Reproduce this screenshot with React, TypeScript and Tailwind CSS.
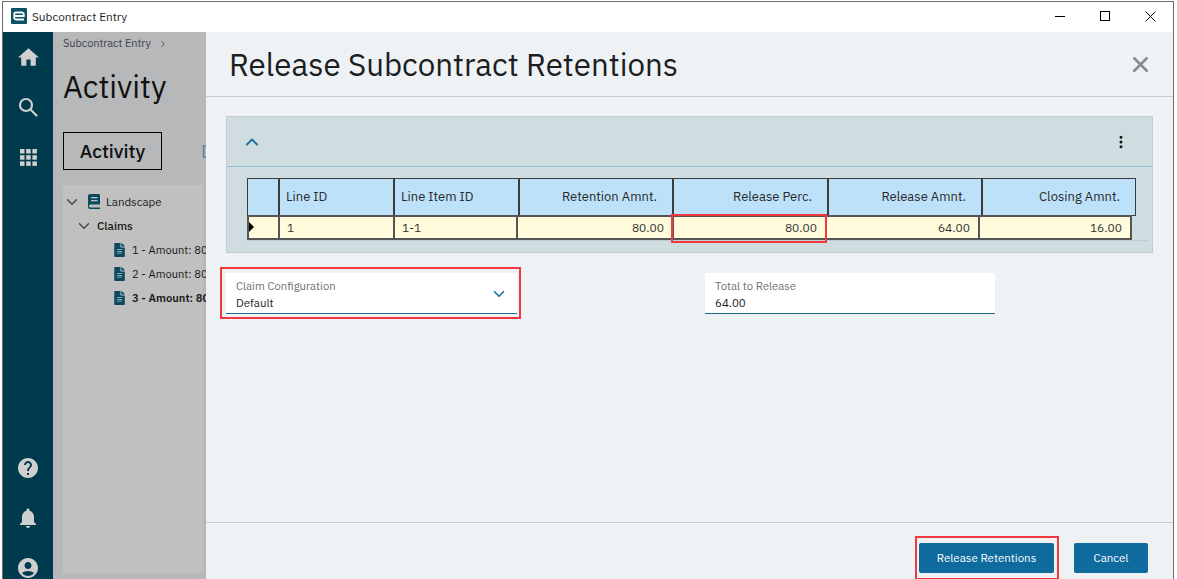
import { ChevronDown, ChevronRight, ChevronUp, X, MoreVertical } from "lucide-react";
import { FaFileAlt } from "react-icons/fa";
import { MdAccountCircle, MdHelp, MdHome, MdNotifications } from "react-icons/md";

const font = "font-['IBM_Plex_Sans','Noto_Sans',sans-serif]";

const headCols = [
  { label: "", w: "w-[31px]", right: false },
  { label: "Line ID", w: "w-[115px]", right: false },
  { label: "Line Item ID", w: "w-[125px]", right: false },
  { label: "Retention Amnt.", w: "w-[154px]", right: true },
  { label: "Release Perc.", w: "w-[155px]", right: true },
  { label: "Release Amnt.", w: "w-[154px]", right: true },
  { label: "Closing Amnt.", w: "w-[155px]", right: true },
];

const rowCols = [
  { value: "", w: "w-[31px]", right: false },
  { value: "1", w: "w-[115px]", right: false },
  { value: "1-1", w: "w-[123px]", right: false },
  { value: "80.00", w: "w-[156px]", right: true },
  { value: "80.00", w: "w-[153px]", right: true },
  { value: "64.00", w: "w-[153px]", right: true },
  { value: "16.00", w: "w-[154px]", right: true },
];

function Logo() {
  return (
    <svg className="mr-[5px] mb-[2px]" width="16" height="16" viewBox="0 0 16 16">
      <rect width="16" height="16" rx="1" fill="#0b5266" />
      <path d="M13 11.500H5a1.800 1.800 0 0 1-1.800-1.800V6.300A1.800 1.800 0 0 1 5 4.500h6a1.800 1.800 0 0 1 1.800 1.800V8H4" fill="none" stroke="#fff" strokeWidth="1.800" />
    </svg>
  );
}

function BookIcon() {
  return (
    <svg width="12" height="15" viewBox="0 0 12 15" fill="#0b4a5e">
      <path d="M2 0h9a1 1 0 0 1 1 1v9.500H2.500a1.500 1.500 0 0 0 0 3H12V15H2a2 2 0 0 1-2-2V2a2 2 0 0 1 2-2z" />
      <rect x="3" y="3" width="6.500" height="1.300" fill="#c0c0c0" />
      <rect x="3" y="6" width="6.500" height="1.300" fill="#c0c0c0" />
    </svg>
  );
}

function TreeDoc({ label, bold }: { label: string; bold?: boolean }) {
  return (
    <div className={`flex items-center h-[24px] pl-[51px] whitespace-nowrap text-[11.200px] text-[#1a1a1a] ${bold ? "font-semibold" : ""}`}>
      <FaFileAlt className="text-[#0b4a5e] w-[11px] h-[14px] shrink-0 mr-[7px]" />
      {label}
    </div>
  );
}

function Field({ label, value, className }: { label: string; value: string; className: string }) {
  return (
    <div className={`bg-white h-[41px] border-b border-[#1a6a94] pl-[10px] pt-[6px] ${className}`}>
      <div className="text-[11.300px] leading-[14px] text-[#6f6f6f]">{label}</div>
      <div className="text-[11.500px] leading-[20px] text-[#222]">{value}</div>
    </div>
  );
}

function NavSlot({ children }: { children: React.ReactNode }) {
  return <div className="h-[50px] shrink-0 flex items-center justify-center">{children}</div>;
}

export default function App() {
  return (
    <div className={`${font} w-[1177px] h-[579px] overflow-hidden bg-white flex flex-col pl-[2px] pt-px pr-[3px]`}>
      <div className="border-t border-l border-r border-[#6d6d6d] flex flex-col flex-1 min-h-0">
        <div className="h-[30px] shrink-0 bg-white flex items-center pl-[8px]">
          <Logo />
          <span className="text-[11.800px] text-[#1c1c1c]">Subcontract Entry</span>
          <div className="ml-auto flex items-center mb-[2px] mr-[17px] gap-[35px]">
            <svg width="10" height="10" viewBox="0 0 10 10" stroke="#000" fill="none"><path d="M0 5.500H10" /></svg>
            <svg width="10" height="10" viewBox="0 0 10 10" stroke="#000" fill="none"><rect x="0.500" y="0.500" width="9" height="9" /></svg>
            <svg width="11" height="11" viewBox="0 0 11 11" stroke="#000" fill="none"><path d="M0.500 0.500L10.500 10.500M10.500 0.500L0.500 10.500" /></svg>
          </div>
        </div>

        <div className="flex-1 flex min-h-0">
          <aside className="w-[50px] shrink-0 bg-[#003a4d] flex flex-col text-[#cfcfcf] overflow-hidden">
            <NavSlot><MdHome className="w-[25px] h-[25px]" /></NavSlot>
            <NavSlot>
              <svg width="20" height="20" viewBox="0 0 20 20" fill="none" stroke="#cfcfcf" strokeWidth="2.200">
                <circle cx="8" cy="8" r="6" />
                <path d="M12.500 12.500L18.500 18.500" strokeLinecap="round" />
              </svg>
            </NavSlot>
            <NavSlot>
              <svg width="17" height="17" viewBox="0 0 17 17" fill="#cfcfcf">
                <rect x="0" y="0" width="4.500" height="4.500" /><rect x="6.200" y="0" width="4.500" height="4.500" /><rect x="12.400" y="0" width="4.500" height="4.500" />
                <rect x="0" y="6.200" width="4.500" height="4.500" /><rect x="6.200" y="6.200" width="4.500" height="4.500" /><rect x="12.400" y="6.200" width="4.500" height="4.500" />
                <rect x="0" y="12.400" width="4.500" height="4.500" /><rect x="6.200" y="12.400" width="4.500" height="4.500" /><rect x="12.400" y="12.400" width="4.500" height="4.500" />
              </svg>
            </NavSlot>
            <div className="mt-auto mb-[-14px]">
              <NavSlot><MdHelp className="w-[24px] h-[24px]" /></NavSlot>
              <NavSlot><MdNotifications className="w-[24px] h-[24px]" /></NavSlot>
              <NavSlot><MdAccountCircle className="w-[24px] h-[24px]" /></NavSlot>
            </div>
          </aside>

          <section className="w-[153px] shrink-0 bg-[#b6b8b9] flex flex-col pl-[10px] overflow-hidden">
            <div className="flex items-center h-[11px] mt-[6px] text-[10.900px] text-[#40424a] whitespace-nowrap">
              Subcontract Entry
              <ChevronRight className="w-[10px] h-[10px] ml-[7px]" />
            </div>
            <h1 className="text-[31px] leading-[40px] text-[#111] mt-[18px]">Activity</h1>
            <div className="flex items-center mt-[25px] whitespace-nowrap">
              <div className="w-[99px] h-[38px] shrink-0 border border-black flex items-center justify-center text-[19px] font-medium text-[#111]">Activity</div>
              <span className="ml-[39px] text-[19px] text-[#5a85a0]">D</span>
            </div>
            <div className="w-[140px] h-[388px] shrink-0 mt-[15px] bg-[#c0c0c0] pt-[4px]">
              <div className="flex items-center h-[25px] text-[11.500px] text-[#1a1a1a]">
                <ChevronDown className="w-[18px] h-[18px] text-[#444] mr-[7px]" strokeWidth={1.800} />
                <BookIcon />
                <span className="ml-[6px]">Landscape</span>
              </div>
              <div className="flex items-center h-[24px] pl-[12px] text-[11.500px] font-medium text-[#1a1a1a]">
                <ChevronDown className="w-[18px] h-[18px] text-[#444] mr-[4px]" strokeWidth={1.800} />
                Claims
              </div>
              <TreeDoc label="1 - Amount: 800" />
              <TreeDoc label="2 - Amount: 800" />
              <TreeDoc label="3 - Amount: 800" bold />
            </div>
          </section>

          <main className="flex-1 min-w-0 bg-[#eef2f5] flex flex-col">
            <header className="h-[65px] shrink-0 border-b border-[#c6cacd] flex items-center pl-[23px] pr-[20px] pt-[2px]">
              <h2 className="text-[31.300px] text-[#1d1d1d]">Release Subcontract Retentions</h2>
              <X className="ml-auto w-[25px] h-[25px] text-[#8a8a8a] mb-[2px]" strokeWidth={2.400} />
            </header>

            <div className="flex-1 min-h-0 pl-[14px] pt-[19px]">
              <div className="ml-[6px] w-[927px] h-[137px] bg-[#cfdce0] border border-[#c3c9cc] flex flex-col">
                <div className="h-[50px] shrink-0 border-b border-[#8fc1d2] flex items-center pl-[15px] pr-[23px]">
                  <ChevronUp className="w-[20px] h-[20px] text-[#17709f]" strokeWidth={2.200} />
                  <MoreVertical className="ml-auto w-[16px] h-[16px] text-[#111]" strokeWidth={2.500} />
                </div>
                <div className="pl-[20px] pt-[11px]">
                  <div className="flex h-[38px] text-[13px]">
                    {headCols.map((col) => (
                      <div
                        key={col.label}
                        className={`${col.w} shrink-0 bg-[#bde1f9] border-y border-l-2 first:border-l last:border-r border-[#3c3c3c] flex items-center pl-[6px] text-[#2a2a2a] ${col.right ? "justify-end pr-[15px]" : ""}`}
                      >
                        {col.label}
                      </div>
                    ))}
                  </div>
                  <div className="flex h-[25px] -mt-px text-[12px]">
                    {rowCols.map((col, i) => (
                      <div
                        key={i}
                        className={`${col.w} shrink-0 relative bg-[#fffbdc] border-y-2 border-l-2 last:border-r-2 border-[#555] flex items-center pl-[7px] text-[#333] ${col.right ? "justify-end pr-[8px]" : ""}`}
                      >
                        {i === 0 && <span className="absolute left-0 top-[5px] w-0 h-0 border-y-[5px] border-y-transparent border-l-[5px] border-l-black" />}
                        {col.value}
                        {i === 4 && <span className="absolute -left-[3px] -top-[3px] -right-[2px] -bottom-[5px] z-10 border-2 border-[#f0383f]" />}
                      </div>
                    ))}
                  </div>
                  <div className="h-px w-[901px] bg-[#c0ccd0]" />
                </div>
              </div>

              <div className="flex mt-[14px]">
                <div className="w-[301px] h-[52px] shrink-0 border-2 border-[#f0383f] pt-[4px] px-[4px]">
                  <div className="relative">
                    <Field label="Claim Configuration" value="Default" className="w-[291px]" />
                    <ChevronDown className="absolute right-[7px] top-[12px] w-[18px] h-[18px] text-[#17709f]" strokeWidth={2.200} />
                  </div>
                </div>
                <div className="ml-[184px] pt-[6px]">
                  <Field label="Total to Release" value="64.00" className="w-[290px]" />
                </div>
              </div>
            </div>

            <footer className="h-[57px] shrink-0 border-t border-[#c6cacd] flex items-start pl-[709px]">
              <div className="mt-[13px] w-[144px] h-[44px] border-2 border-[#f0383f] pl-[2px] pt-[5px]">
                <button className="w-[135px] h-[30px] bg-[#0f6a9e] rounded-[2px] text-white text-[11.500px]">Release Retentions</button>
              </div>
              <button className="mt-[20px] ml-[15px] w-[74px] h-[30px] bg-[#0f6a9e] rounded-[2px] text-white text-[11.500px]">Cancel</button>
            </footer>
          </main>
        </div>
      </div>
    </div>
  );
}
